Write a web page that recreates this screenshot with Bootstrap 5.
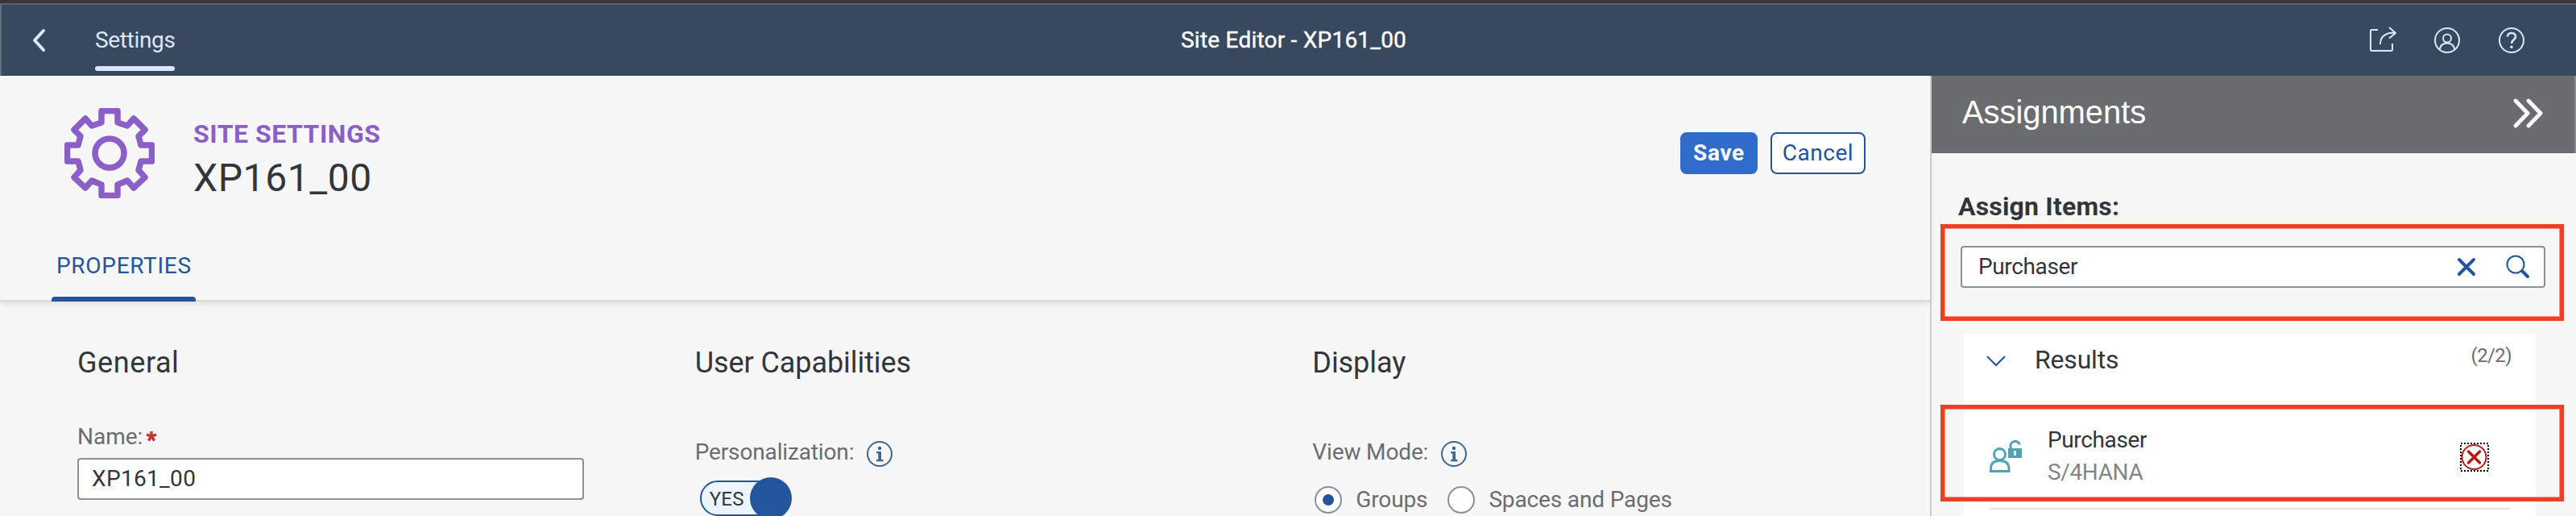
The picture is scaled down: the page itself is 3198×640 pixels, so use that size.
<!DOCTYPE html>
<html lang="en">
<head>
<meta charset="utf-8">
<title>Site Editor - XP161_00</title>
<link rel="stylesheet" href="https://cdn.jsdelivr.net/npm/bootstrap@5.3.0/dist/css/bootstrap.min.css">
<style>
body{width:3198px;height:640px;overflow:hidden;background:#f7f7f7;color:#32363a;font-family:Roboto,"Open Sans",sans-serif;font-size:28px;line-height:40px;white-space:nowrap}
svg{display:block;flex:none;fill:none}
h1,h2,h3,p{margin:0;line-height:inherit;font-weight:400}
.chrome-edge{height:6px;background:#35363a;border-bottom:2px solid #5f6164}
.shell{height:88px;background:#38485e;color:#d9e7fc;padding:0 63px 0 38px;border-left:2px solid #607083}
.shell-start{width:1128px}
.shell-end{width:1100px}
.shell-tab{height:88px;padding-top:24px;margin-left:60px;letter-spacing:-.012em}
.shell-tab::after{content:"";display:block;height:6px;width:99px;border-radius:3px;background:#d9e7fc;margin-top:12px}
.shell-title{color:#fff;letter-spacing:.008em;font-size:28px;width:282px;margin-left:298px;-webkit-text-stroke:.4px #fff}
.icon-bar{gap:46px}
.main-pane{width:2396px}
.object-head{height:280px;border-bottom:2px solid #d9d9d9;box-shadow:0 3px 8px rgba(0,0,0,.1)}
.head-row{height:214px;padding:40px 80px 0}
.head-titles{margin:12px 0 0 48px}
.head-actions{gap:16px;margin-top:30px}
.site-kicker{font-size:32px;font-weight:700;color:#8b5fc7;letter-spacing:.016em}
.site-name{font-size:48px;line-height:60px;margin-top:5px!important;letter-spacing:.013em}
.btn-ui{height:52px;border-radius:8px;border-width:2px;font-size:28px;line-height:46px;padding:0}
.btn-save,.btn-save:hover{width:96px;background:#2f6ccb;border-color:#2f6ccb;color:#fff;font-weight:700;letter-spacing:.024em}
.btn-cancel,.btn-cancel:hover{width:118px;background:#fff;border-color:#22559c;color:#22559c;letter-spacing:.018em}
.prop-tab{width:179px;height:66px;margin-left:64px;padding:2px 0 0 6px;color:#22559c;letter-spacing:.025em}
.prop-tab::after{content:"";display:block;height:6px;margin:18px 0 0 -6px;background:#22559c;border-radius:4px 4px 0 0}
.form-cols{padding:52px 0 0 96px}
.form-cols section{width:767px}
.form-cols h2{font-size:36px;line-height:48px;letter-spacing:-.002em}
.lbl{color:#6a6d70}
.star{margin:12px 0 0 4px}
.info-icon{margin:6px 0 0 16px}
.ui-input{width:629px;height:52px;margin-top:6px;background:#fff;border:2px solid #89919a;border-radius:4px;padding:4px 16px 0;letter-spacing:.012em}
.toggle-ui{width:114px;height:52px;margin:15px 0 0 6px;position:relative}
.toggle-ui .track{height:44px;width:108px;background:#ebf5fe;border:2px solid #22559c;border-radius:22px;padding-left:10px;font-size:24px;line-height:42px;letter-spacing:.01em}
.toggle-ui .knob{position:absolute;right:0;top:-4px;width:52px;height:52px;border-radius:50%;background:#22559c}
.radio-ui{width:34px;height:34px;border:2px solid #89919a;border-radius:50%;background:#fff}
.radio-ui i{width:14px;height:14px;border-radius:50%;background:#22559c}
.side-pane{width:802px;height:546px;border-left:2px solid #ccc}
.side-head{height:96px;background:#6a6c70;color:#fff;border-right:2px solid #888b8e;padding:0 38px 0 38px;font-family:"Liberation Sans",Arial,sans-serif;font-size:40px;letter-spacing:-.002em}
.assign-title{font-size:32px;font-weight:700;letter-spacing:.006em;margin:46px 0 0 33px!important}
.callout-box{position:relative;width:774px;height:120px;margin:2px 0 0 11px;border:5px solid #ee4023;box-shadow:inset 0 0 0 1px #f4957f}
.search-ui{width:726px;height:52px;margin:22px 0 0 20px;background:#fff;border:2px solid #89919a;border-radius:4px;padding:0 17px 0 20px}
.results{width:710px;height:226px;margin:16px 0 0 40px;background:#fff}
.results-head{height:88px;padding:12px 30px 0 28px}
.results-name{font-size:32px;margin-left:36px;letter-spacing:-.006em}
.count{font-size:24px;color:#6a6d70;margin-top:-5px;letter-spacing:-.025em}
.hit{left:-29px;margin:0;padding-left:56px}
.rule{height:2px;width:646px;margin:8px 0 0 32px;background:#e4e4e4}
.tight{letter-spacing:-.013em}
.muted-line{color:#858585}
.remove{width:36px;height:36px;margin:42px 88px 0 auto}
</style>
<script src="https://cdn.jsdelivr.net/npm/bootstrap@5.3.0/dist/js/bootstrap.bundle.min.js"></script>
</head>
<body>
<div class="chrome-edge"></div>
<header class="shell d-flex align-items-center">
  <div class="shell-start d-flex align-items-center">
    <svg width="18" height="32" viewBox="0 0 18 32" stroke="#d9e7fc" stroke-width="4" stroke-linecap="round" stroke-linejoin="round"><path d="M14 4 3 16l11 12"/></svg>
    <a class="shell-tab text-reset text-decoration-none">Settings</a>
  </div>
  <h1 class="shell-title">Site Editor - XP161_00</h1>
  <div class="shell-end d-flex justify-content-end align-items-center ms-auto icon-bar">
    <svg width="34" height="34" viewBox="0 0 34 34" stroke="#d9e7fc" stroke-width="2"><path d="M11 4H3.500Q2 4 2 5.500V28.500Q2 30 3.500 30H27.500Q29 30 29 28.500V21"/><path d="M14 22C14 12 20 7.500 32 7.500M25 1l8 7-8 6.500"/></svg>
    <svg width="34" height="34" viewBox="0 0 34 34" stroke="#d9e7fc" stroke-width="2"><circle cx="17" cy="17" r="15"/><circle cx="17" cy="14.500" r="5"/><path d="M8 28.500c0-5 4-8 9-8s9 3 9 8"/></svg>
    <svg width="34" height="34" viewBox="0 0 34 34" stroke="#d9e7fc" stroke-width="2"><circle cx="17" cy="17" r="15"/><path stroke-width="2.600" d="M12 12.500C12 6.500 22 6.500 22 12.500 22 16 17 16.500 17 21"/><circle cx="17" cy="25.300" r="1.800" fill="#d9e7fc" stroke="none"/></svg>
  </div>
</header>
<div class="d-flex">
  <main class="main-pane">
    <div class="object-head">
      <div class="head-row d-flex align-items-start">
        <svg width="112" height="112" viewBox="0 0 112 112" stroke="#8b5fc7" stroke-width="7.500" stroke-linejoin="round"><circle cx="56" cy="56" r="18"/><path d="M46 3.500H66V18L78 22L86 13L100 27L92 35L95 46H108.500V66H95L92 77L100 86L86 99L78 90L66 95V108.500H46V95L34 90L26 99L12 86L20 77L17 66H3.500V46H17L20 35L12 27L26 13L34 22L46 18Z"/></svg>
        <div class="head-titles flex-grow-1">
          <p class="site-kicker">SITE SETTINGS</p>
          <p class="site-name">XP161_00</p>
        </div>
        <div class="head-actions d-flex">
          <button class="btn btn-ui btn-save">Save</button>
          <button class="btn btn-ui btn-cancel">Cancel</button>
        </div>
      </div>
      <div class="prop-tab">PROPERTIES</div>
    </div>
    <div class="form-cols d-flex">
      <section>
        <h2 style="letter-spacing:.016em">General</h2>
        <div class="lbl d-flex" style="margin-top:48px">Name:<svg class="star" width="14" height="14" viewBox="-7 -7 14 14" stroke="#c0392f" stroke-width="3.400"><path d="M0 0V-6M0 0 6-1.800M0 0 3.600 5.500M0 0-3.600 5.500M0 0-6-1.800"/></svg></div>
        <div class="ui-input">XP161_00</div>
      </section>
      <section>
        <h2>User Capabilities</h2>
        <div class="lbl d-flex" style="margin-top:67px;letter-spacing:-.005em">Personalization:<svg class="info-icon" width="32" height="32" viewBox="0 0 32 32"><circle cx="16" cy="16" r="15" stroke="#3f658f" stroke-width="2"/><circle cx="16" cy="9" r="2.200" fill="#3f658f"/><path fill="#3f658f" d="M12 13h6v10h2.500v2.300h-8.500V23h2.300v-7.700H12z"/></svg></div>
        <div class="toggle-ui"><div class="track">YES</div><span class="knob"></span></div>
      </section>
      <section>
        <h2>Display</h2>
        <div class="lbl d-flex" style="margin-top:67px;letter-spacing:-.005em">View Mode:<svg class="info-icon" width="32" height="32" viewBox="0 0 32 32"><circle cx="16" cy="16" r="15" stroke="#3f658f" stroke-width="2"/><circle cx="16" cy="9" r="2.200" fill="#3f658f"/><path fill="#3f658f" d="M12 13h6v10h2.500v2.300h-8.500V23h2.300v-7.700H12z"/></svg></div>
        <div class="lbl d-flex align-items-center" style="margin-top:19px;letter-spacing:-.005em">
          <span class="radio-ui d-flex align-items-center justify-content-center" style="margin-left:3px"><i></i></span><span style="margin-left:17px">Groups</span>
          <span class="radio-ui" style="margin-left:25px"></span><span style="margin-left:17px">Spaces and Pages</span>
        </div>
      </section>
    </div>
  </main>
  <aside class="side-pane">
    <div class="side-head d-flex justify-content-between align-items-center">
      <span style="margin-top:-6px">Assignments</span>
      <svg width="38" height="38" viewBox="0 0 38 38" stroke="#fff" stroke-width="4.800" stroke-linecap="round" stroke-linejoin="round" style="margin-top:-5px"><path d="M3 4 18 19.500 3 35M19 4l15 15.500L19 35"/></svg>
    </div>
    <h2 class="assign-title">Assign Items:</h2>
    <div class="callout-box">
      <div class="search-ui d-flex align-items-center">
        <span class="flex-grow-1 tight">Purchaser</span>
        <svg width="24" height="24" viewBox="0 0 24 24" stroke="#22559c" stroke-width="4" stroke-linecap="round"><path d="M3 3l18 18M21 3 3 21"/></svg>
        <svg width="30" height="30" viewBox="0 0 30 30" stroke="#22559c" stroke-width="2" style="margin-left:37px"><circle cx="12" cy="12" r="10.500"/><path stroke-width="4" stroke-linecap="round" d="M20.500 20.500 27 27"/></svg>
      </div>
    </div>
    <div class="results">
      <div class="results-head d-flex align-items-start">
        <svg width="24" height="14" viewBox="0 0 24 14" stroke="#22559c" stroke-width="2" style="margin-top:15px"><path d="M1 1l11 11L23 1"/></svg>
        <span class="results-name flex-grow-1">Results</span>
        <span class="count">(2/2)</span>
      </div>
      <div class="callout-box hit d-flex">
        <svg width="40" height="40" viewBox="0 0 40 40" stroke="#4fa3b5" stroke-width="3" style="margin-top:39px"><circle cx="12.500" cy="17.500" r="7"/><path d="M1.500 38.500V35C1.500 28 6 25.500 12.500 25.500S24 28 24 35v3.500z"/><path d="M26 11V6.500C26 0 37 0 37 5.500"/><path stroke="none" fill="#4fa3b5" d="M23 10h17v12H23z"/><path stroke="#fff" stroke-width="2.500" d="M31.500 13v6"/></svg>
        <div style="margin:19px 0 0 32px"><p class="tight">Purchaser</p><p class="tight muted-line">S/4HANA</p></div>
        <svg class="remove" viewBox="0 0 36 36"><rect x="1" y="1" width="34" height="34" stroke="#000" stroke-width="2" stroke-dasharray="2 2"/><circle cx="17.500" cy="18" r="15" stroke="#ab1e17" stroke-width="2"/><path stroke="#ab1e17" stroke-width="3.500" stroke-linecap="round" d="M10.500 11l14 14M24.500 11l-14 14"/></svg>
      </div>
      <div class="rule"></div>
    </div>
  </aside>
</div>
</body>
</html>
